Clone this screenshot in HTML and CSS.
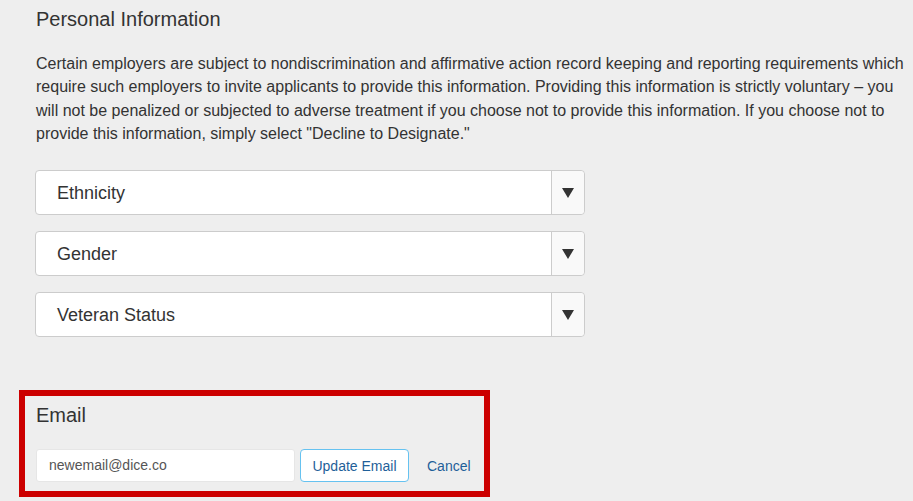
FILE: index.html
```html
<!DOCTYPE html>
<html>
<head>
<meta charset="utf-8">
<link rel="stylesheet" href="styles.css">
</head>
<body>
<div class="page">
  <section class="personal">
    <h2 class="title">Personal Information</h2>
    <p class="intro">Certain employers are subject to nondiscrimination and affirmative action record keeping and reporting requirements which require such employers to invite applicants to provide this information. Providing this information is strictly voluntary – you will not be penalized or subjected to adverse treatment if you choose not to provide this information. If you choose not to provide this information, simply select "Decline to Designate."</p>
    <div class="selects">
      <div class="select"><span class="select-label">Ethnicity</span><span class="select-arrow"><svg width="12" height="10" viewBox="0 0 12 10"><path d="M0 0H12L6 10Z" fill="#333"/></svg></span></div>
      <div class="select"><span class="select-label">Gender</span><span class="select-arrow"><svg width="12" height="10" viewBox="0 0 12 10"><path d="M0 0H12L6 10Z" fill="#333"/></svg></span></div>
      <div class="select"><span class="select-label">Veteran Status</span><span class="select-arrow"><svg width="12" height="10" viewBox="0 0 12 10"><path d="M0 0H12L6 10Z" fill="#333"/></svg></span></div>
    </div>
  </section>
  <section class="email">
    <h2 class="title">Email</h2>
    <div class="email-row">
      <div class="email-input">newemail@dice.co</div>
      <button class="btn-update">Update Email</button>
      <a class="cancel">Cancel</a>
    </div>
  </section>
</div>
</body>
</html>
```
FILE: styles.css
```css
html, body {
  margin: 0;
  padding: 0;
  background: #eeeeee;
  font-family: "Liberation Sans", Arial, sans-serif;
  color: #333333;
}
.page {
  width: 913px;
  height: 501px;
  overflow: hidden;
}
.personal {
  padding: 7px 0 0 36px;
}
.title {
  margin: 0;
  font-size: 20px;
  font-weight: normal;
  line-height: 24px;
  color: #333;
}
.intro {
  margin: 21px 0 0 0;
  width: 875px;
  font-size: 16px;
  line-height: 23.3px;
}
.selects {
  margin-top: 25px;
  display: flex;
  flex-direction: column;
  gap: 16px;
  width: 550px;
  margin-left: -1px;
}
.select {
  height: 43px;
  background: #fff;
  border: 1px solid #cccccc;
  border-radius: 4px;
  display: flex;
  align-items: center;
}
.select-label {
  flex: 1;
  padding: 2px 0 0 21px;
  font-size: 18px;
  color: #333;
}
.select-arrow {
  width: 32px;
  height: 100%;
  border-left: 1px solid #cccccc;
  background: #f9f9f9;
  border-radius: 0 4px 4px 0;
  display: flex;
  align-items: center;
  justify-content: center;
}
.email {
  margin: 53px 0 0 19px;
  width: 448px;
  height: 95px;
  border: 6px solid #cc0000;
  padding: 0 0 0 11px;
}
.email .title {
  margin-top: 7px;
}
.email-row {
  margin-top: 22px;
  display: flex;
  align-items: center;
}
.email-input {
  width: 259px;
  height: 33px;
  box-sizing: border-box;
  background: #fff;
  border-radius: 3px;
  border: 1px solid #e6e6e6;
  padding-left: 12px;
  font-size: 14px;
  line-height: 31px;
  color: #555;
}
.btn-update {
  margin-left: 5px;
  width: 109px;
  height: 33px;
  background: #fff;
  border: 1px solid #66c2f0;
  border-radius: 4px;
  font-family: "Liberation Sans", Arial, sans-serif;
  font-size: 14px;
  color: #1f5f99;
  padding: 0;
}
.cancel {
  margin-left: 18px;
  font-size: 14px;
  color: #1f5f99;
}
```
